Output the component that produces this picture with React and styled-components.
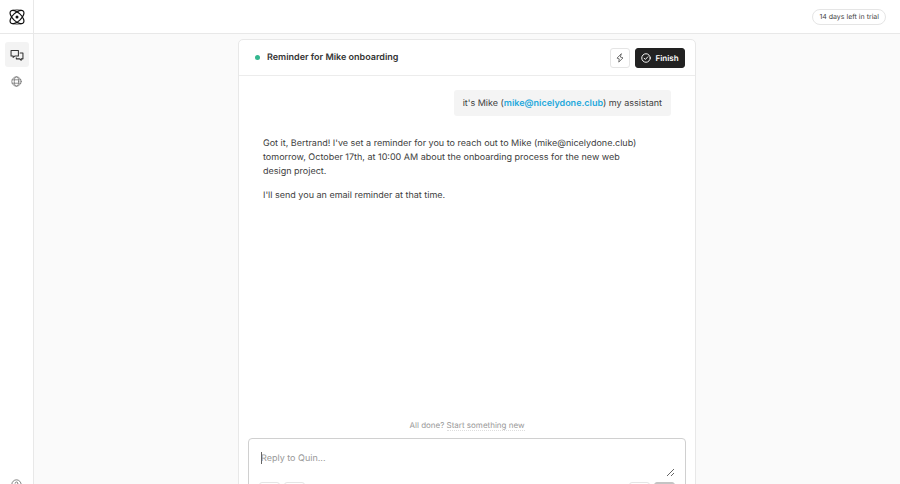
import React from "react";
import styled, { createGlobalStyle } from "styled-components";

const GlobalStyle = createGlobalStyle`
  * {
    box-sizing: border-box;
  }

  body {
    margin: 0;
    overflow: hidden;
    background-color: #fafafa;
    color: #404040;
    font-family: Inter, "Liberation Sans", sans-serif;
    font-size: 9px;
    text-rendering: geometricPrecision;
  }

  button,
  textarea {
    font-family: inherit;
    text-rendering: inherit;
  }
`;

const Shell = styled.div`
  display: flex;
  height: calc(100vh + 38px);
`;

const Sidebar = styled.nav`
  width: 34px;
  flex-shrink: 0;
  display: flex;
  flex-direction: column;
  align-items: center;
  background-color: white;
  border-right: 1px solid #e8e8e8;
  padding-bottom: 32px;
`;

const LogoLink = styled.a`
  height: 34px;
  width: 100%;
  display: flex;
  align-items: center;
  justify-content: center;
  color: #111;
  border-bottom: 1px solid #e8e8e8;
  margin-bottom: 8px;
`;

const NavLink = styled.a`
  width: 24px;
  height: 25px;
  display: flex;
  align-items: center;
  justify-content: center;
  border-radius: 3px;
  margin-bottom: 2px;
  color: ${(props) => (props.$active ? "#333" : "#777")};
  background-color: ${(props) => (props.$active ? "#f3f3f3" : "transparent")};
`;

const HelpLink = styled.a`
  display: flex;
  margin-top: auto;
  color: #777;
`;

const Main = styled.main`
  flex: 1;
  min-width: 0;
  display: flex;
  flex-direction: column;
`;

const TopBar = styled.header`
  height: 34px;
  flex-shrink: 0;
  display: flex;
  align-items: center;
  justify-content: flex-end;
  padding: 0 14px;
  background-color: white;
  border-bottom: 1px solid #e8e8e8;
`;

const TrialBadge = styled.span`
  padding: 0 6px;
  border: 1px solid #e5e5e5;
  border-radius: 8px;
  font-size: 7px;
  line-height: 14px;
  color: #444;
`;

const Card = styled.section`
  flex: 1;
  width: calc(100% - 20px);
  max-width: 458px;
  margin: 5px auto 0;
  display: flex;
  flex-direction: column;
  background-color: white;
  border: 1px solid #e8e8e8;
  border-radius: 5px 5px 0 0;
`;

const CardHeader = styled.header`
  height: 36px;
  display: flex;
  align-items: center;
  gap: 5px;
  padding: 0 10px 0 16px;
  border-bottom: 1px solid #ececec;
`;

const StatusDot = styled.span`
  width: 5px;
  height: 5px;
  margin-right: 2px;
  border-radius: 50%;
  background-color: #34b78f;
`;

const Title = styled.h1`
  flex: 1;
  margin: 0;
  font-size: 9px;
  line-height: 14px;
  font-weight: 600;
  color: #333;
`;

const Button = styled.button`
  height: 20px;
  min-width: ${(props) => (props.$primary ? 50 : 20)}px;
  display: flex;
  align-items: center;
  justify-content: center;
  gap: 4px;
  padding: 0 4px;
  border: 1px solid ${(props) => (props.$primary ? "#222" : "#e5e5e5")};
  border-radius: 3px;
  font-size: 8px;
  font-weight: 600;
  color: ${(props) => (props.$primary ? "white" : "#444")};
  background-color: ${(props) => (props.$primary ? "#222" : "white")};
`;

const Messages = styled.div`
  flex: 1;
  display: flex;
  flex-direction: column;
  padding: 14px 24px;
`;

const UserMessage = styled.p`
  align-self: flex-end;
  margin: 0 0 21px;
  padding: 7px 9px 5px;
  border-radius: 3px;
  line-height: 14px;
  background-color: #f4f4f4;
`;

const EmailLink = styled.a`
  font-weight: 600;
  color: #26a9dc;
  text-decoration: none;
`;

const Reply = styled.div`
  max-width: 380px;
  line-height: 14px;

  p {
    margin: 0 0 10px;
  }
`;

const DoneHint = styled.p`
  margin: 0 0 7px;
  text-align: center;
  font-size: 8px;
  line-height: 12px;
  color: #999;
`;

const NewLink = styled.a`
  color: inherit;
  text-decoration: none;
  border-bottom: 1px dotted #ddd;
`;

const Composer = styled.form`
  position: relative;
  margin: 0 9px 10px;
  padding: 8px 10px;
  border: 1px solid #d0d0d0;
  border-radius: 4px;
`;

const ReplyInput = styled.textarea`
  display: block;
  width: 100%;
  height: 30px;
  margin-bottom: 5px;
  padding: 5px 2px 3px;
  border: 0;
  outline: 0;
  resize: vertical;
  font-size: 9px;
  line-height: 14px;
  background-color: transparent;
  caret-color: transparent;

  &::placeholder {
    color: #999;
  }
`;

const Caret = styled.span`
  position: absolute;
  top: 13px;
  left: 12px;
  width: 1px;
  height: 12px;
  background-color: #666;
`;

const Tools = styled.div`
  display: flex;
  gap: 4px;
`;

const ToolButton = styled.button`
  width: 21px;
  height: 20px;
  padding: 0;
  border: 1px solid ${(props) => (props.$send ? "#c4c4c4" : "#e5e5e5")};
  border-radius: 3px;
  color: ${(props) => (props.$send ? "white" : "#555")};
  background-color: ${(props) => (props.$send ? "#c4c4c4" : "white")};
`;

const Spacer = styled.span`
  flex: 1;
`;

const Icon = ({ size, stroke = 1, children }) => (
  <svg
    width={size}
    height={size}
    viewBox="0 0 16 16"
    fill="none"
    stroke="currentColor"
    strokeWidth={stroke}
    strokeLinecap="round"
    strokeLinejoin="round"
    aria-hidden="true"
  >
    {children}
  </svg>
);

const LogoIcon = () => (
  <Icon size={16} stroke={1.2}>
    <ellipse cx="8" cy="8" rx="8.6" ry="4.2" transform="rotate(43 8 8)" />
    <ellipse cx="8" cy="8" rx="8.6" ry="4.2" transform="rotate(-43 8 8)" />
    <path d="M4 1.2Q8 .4 12 1.2M4 14.8Q8 15.6 12 14.8" strokeWidth="0.7" />
    <circle cx="8" cy="8" r="1.5" fill="currentColor" stroke="none" />
  </Icon>
);

const ChatsIcon = () => (
  <Icon size={14} stroke={1.2}>
    <path d="M1.2 2.8h8.4v6.4H5.4L3.6 10.8V9.2H1.2z" />
    <path d="M11.6 5.8h3.2v6.6h-2V14L11 12.4H7.2v-1.2" />
  </Icon>
);

const GlobeIcon = () => (
  <Icon size={11} stroke={1.2}>
    <circle cx="8" cy="8" r="6.8" />
    <ellipse cx="8" cy="8" rx="3.2" ry="6.8" />
    <path d="M1.8 5.5h12.4M1.8 10.5h12.4" />
  </Icon>
);

const HelpIcon = () => (
  <Icon size={11} stroke={1.3}>
    <circle cx="8" cy="8" r="6.8" />
    <path d="M6 6.2a2 2 0 1 1 2.8 2Q8 8.5 8 9.5M8 11.7v.1" />
  </Icon>
);

const BoltIcon = () => (
  <Icon size={10} stroke={1.2}>
    <path d="M9.8 1.5 3.2 8.2l3.6 1.2-.8 5.1 6.8-6.7-3.8-1.2z" />
  </Icon>
);

const CheckIcon = () => (
  <Icon size={10} stroke={1.5}>
    <circle cx="8" cy="8" r="6.8" />
    <path d="m5 8.3 2 2 4-4.3" />
  </Icon>
);

const App = () => {
  return (
    <>
      <GlobalStyle />
      <Shell>
        <Sidebar>
          <LogoLink href="#" aria-label="Home">
            <LogoIcon />
          </LogoLink>
          <NavLink href="#chats" aria-label="Chats" $active>
            <ChatsIcon />
          </NavLink>
          <NavLink href="#explore" aria-label="Explore">
            <GlobeIcon />
          </NavLink>
          <HelpLink href="#help" aria-label="Help">
            <HelpIcon />
          </HelpLink>
        </Sidebar>
        <Main>
          <TopBar>
            <TrialBadge>14 days left in trial</TrialBadge>
          </TopBar>
          <Card>
            <CardHeader>
              <StatusDot />
              <Title>Reminder for Mike onboarding</Title>
              <Button type="button" aria-label="Shortcuts">
                <BoltIcon />
              </Button>
              <Button type="button" $primary>
                <CheckIcon />
                Finish
              </Button>
            </CardHeader>
            <Messages>
              <UserMessage>
                it's Mike (
                <EmailLink href="mailto:mike@nicelydone.club">
                  mike@nicelydone.club
                </EmailLink>
                ) my assistant
              </UserMessage>
              <Reply>
                <p>
                  Got it, Bertrand! I've set a reminder for you to reach out to
                  Mike (mike@nicelydone.club) tomorrow, October 17th, at 10:00
                  AM about the onboarding process for the new web design
                  project.
                </p>
                <p>I'll send you an email reminder at that time.</p>
              </Reply>
            </Messages>
            <DoneHint>
              All done? <NewLink href="#new">Start something new</NewLink>
            </DoneHint>
            <Composer>
              <ReplyInput aria-label="Reply" placeholder="Reply to Quin..." />
              <Caret />
              <Tools>
                <ToolButton type="button" aria-label="Attach" />
                <ToolButton type="button" aria-label="Mention" />
                <Spacer />
                <ToolButton type="button" aria-label="Dictate" />
                <ToolButton type="submit" aria-label="Send" $send />
              </Tools>
            </Composer>
          </Card>
        </Main>
      </Shell>
    </>
  );
};

export default App;
